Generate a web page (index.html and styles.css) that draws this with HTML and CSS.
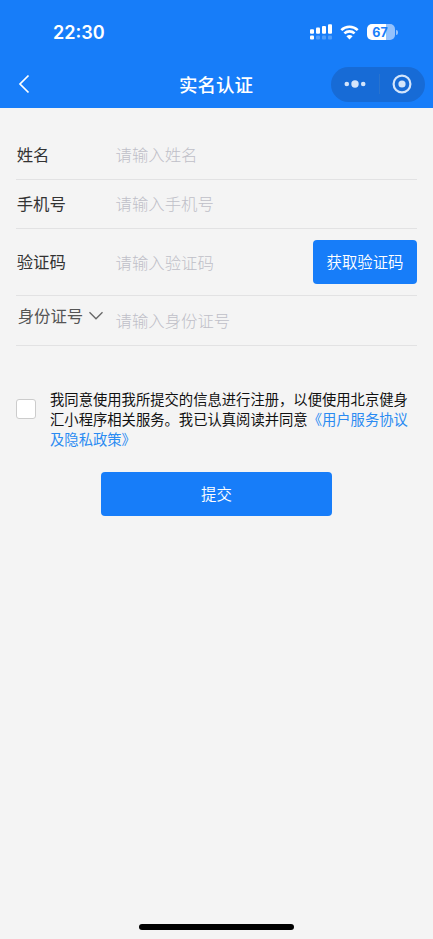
FILE: index.html
```html
<!DOCTYPE html>
<html lang="zh-CN">
<head>
<meta charset="utf-8">
<title>实名认证</title>
<link rel="stylesheet" href="styles.css">
</head>
<body>
<header class="header">
  <div class="status">
    <span class="time">22:30</span>
    <div class="indicators">
      <svg class="signal" width="22" height="16" viewBox="0 0 22 16" fill="#fff">
        <rect x="0" y="5.2" width="4" height="4.6" rx="1"/>
        <rect x="6" y="3.6" width="4" height="6.2" rx="1"/>
        <rect x="12" y="2" width="4" height="7.8" rx="1"/>
        <rect x="18" y="0.2" width="4" height="9.6" rx="1"/>
        <rect x="0" y="11.6" width="4" height="3.9" rx="1"/>
        <g opacity=".25"><rect x="6" y="11.6" width="4" height="3.9" rx="1"/><rect x="12" y="11.6" width="4" height="3.9" rx="1"/><rect x="18" y="11.6" width="4" height="3.9" rx="1"/></g>
      </svg>
      <svg class="wifi" width="19" height="15" viewBox="0 0 19 15">
        <path d="M1.300 5.100C6 .6 13 .6 17.700 5.100M4.400 8.400c2.900-2.700 7.300-2.700 10.200 0" fill="none" stroke="#fff" stroke-width="2.600"/>
        <path d="M6.400 11.300c1.700-1.600 4.500-1.600 6.200 0L9.500 14.400z" fill="#fff"/>
      </svg>
      <div class="battery"><span class="level">67</span></div>
    </div>
  </div>
  <nav class="nav">
    <svg class="back" width="12" height="20" viewBox="0 0 12 20"><path d="M10.500 1.500L2 10l8.500 8.500" fill="none" stroke="#fff" stroke-width="1.700"/></svg>
    <h1 class="title">实名认证</h1>
    <div class="capsule">
      <svg width="22" height="8" viewBox="0 0 22 8"><g fill="#d4e5fb"><circle cx="2.800" cy="4" r="2.300"/><circle cx="11" cy="4" r="3.700"/><circle cx="19.200" cy="4" r="2.300"/></g></svg>
      <svg width="20" height="20" viewBox="0 0 20 20"><circle cx="10" cy="10" r="8.400" fill="none" stroke="#d4e5fb" stroke-width="2.200"/><circle cx="10" cy="10" r="3.600" fill="#d4e5fb"/></svg>
    </div>
  </nav>
</header>
<main class="main">
  <form class="form">
    <div class="row row-name"><label class="label">姓名</label><span class="hint">请输入姓名</span></div>
    <div class="row"><label class="label">手机号</label><span class="hint">请输入手机号</span></div>
    <div class="row row-code"><label class="label">验证码</label><span class="hint">请输入验证码</span><button type="button" class="btn btn-code">获取验证码</button></div>
    <div class="row row-id"><label class="label label-id">身份证号<svg class="chevron" width="16" height="10" viewBox="0 0 16 10"><path d="M1.500 1.200L8 7.800l6.500-6.600" fill="none" stroke="#666" stroke-width="1.300"/></svg></label><span class="hint">请输入身份证号</span></div>
  </form>
  <div class="agreement">
    <span class="checkbox"></span>
    <p class="terms">我同意使用我所提交的信息进行注册，以便使用北京健身<br>汇小程序相关服务。我已认真阅读并同意<a class="link">《用户服务协议<br>及隐私政策》</a></p>
  </div>
  <button type="button" class="btn btn-submit">提交</button>
</main>
<footer class="home"><span class="home-bar"></span></footer>
</body>
</html>
```
FILE: styles.css
```css
* { box-sizing: border-box; }
body {
  margin: 0;
  height: 939px;
  display: flex;
  flex-direction: column;
  overflow: hidden;
  background: #f4f4f4;
  color: #333;
  font-family: "Noto Sans CJK SC", sans-serif;
}
.header { height: 108px; background: #177df9; color: #fff; }
.status {
  height: 60px;
  padding: 5px 38px 0 53px;
  display: flex;
  align-items: center;
  justify-content: space-between;
}
.time { margin-top: -2px; font: 600 18.100px/24px Inter, sans-serif; }
.indicators { display: flex; align-items: center; margin-top: -1px; }
.signal { margin-right: 8px; }
.wifi { margin-right: 8px; }
.battery {
  position: relative;
  width: 28px;
  height: 16px;
  border-radius: 5px;
  background: linear-gradient(90deg, #fff 67%, #94c2fd 67%);
  color: #177df9;
  text-align: center;
}
.battery::after {
  content: "";
  position: absolute;
  left: 29px;
  top: 5.500px;
  width: 1.500px;
  height: 5px;
  border-radius: 0 2px 2px 0;
  background: #94c2fd;
}
.level { display: block; padding-right: 2px; font: 700 12.500px/17px Inter, sans-serif; }
.nav {
  height: 48px;
  padding: 0 8px 0 18px;
  display: grid;
  grid-template-columns: 95px 1fr 94px;
  align-items: center;
}
.title {
  margin: 0;
  padding: 0 12px 1px 0;
  font-size: 18.500px;
  font-weight: 500;
  line-height: 28px;
  text-align: center;
}
.capsule {
  height: 35px;
  padding: 0 13px;
  display: flex;
  align-items: center;
  justify-content: space-between;
  border-radius: 18px;
  background: linear-gradient(#2873cf, #2873cf) 48px 50% / 1px 20px no-repeat #176bd6;
}
.main { flex: 1; padding: 22px 16px 0; }
.row {
  height: 49.500px;
  display: flex;
  align-items: center;
  border-bottom: 1px solid #e2e2e3;
  font-size: 16.400px;
  line-height: 24px;
}
.row-name { padding-top: 1px; }
.row-code { height: 67px; }
.row-code .hint { padding-bottom: 0; }
.row-id { height: 50px; }
.label { width: 99.500px; padding: 0 0 2px 0.700px; flex: none; font-weight: 370; }
.label-id {
  padding: 0 0 11px 1.700px;
  display: flex;
  align-items: center;
  color: #555;
}
.chevron { margin: 2px 0 0 5px; }
.hint { flex: 1; padding-bottom: 2px; color: #bfbfc8; font-weight: 300; }
.btn {
  padding: 0 0 2px;
  border: 0;
  border-radius: 4px;
  background: #177df9;
  color: #fff;
  font-family: inherit;
  font-size: 15.400px;
  font-weight: 350;
  line-height: 24px;
}
.btn-code { width: 104px; height: 44px; }
.agreement {
  margin-top: 43px;
  display: flex;
  align-items: flex-start;
}
.checkbox {
  width: 20px;
  height: 20px;
  margin: 10px 14px 0 0;
  flex: none;
  border: 1px solid #ccc;
  border-radius: 3px;
  background: #fff;
}
.terms {
  margin: 0;
  color: #111;
  font-size: 14.320px;
  font-weight: 370;
  line-height: 20px;
  white-space: nowrap;
}
.link { color: #2a8bf2; }
.btn-submit {
  display: block;
  width: 231px;
  height: 44px;
  margin: 23px auto 0;
}
.home { height: 15px; display: flex; justify-content: center; }
.home-bar { width: 155px; height: 6px; border-radius: 3px; background: #000; }
```
